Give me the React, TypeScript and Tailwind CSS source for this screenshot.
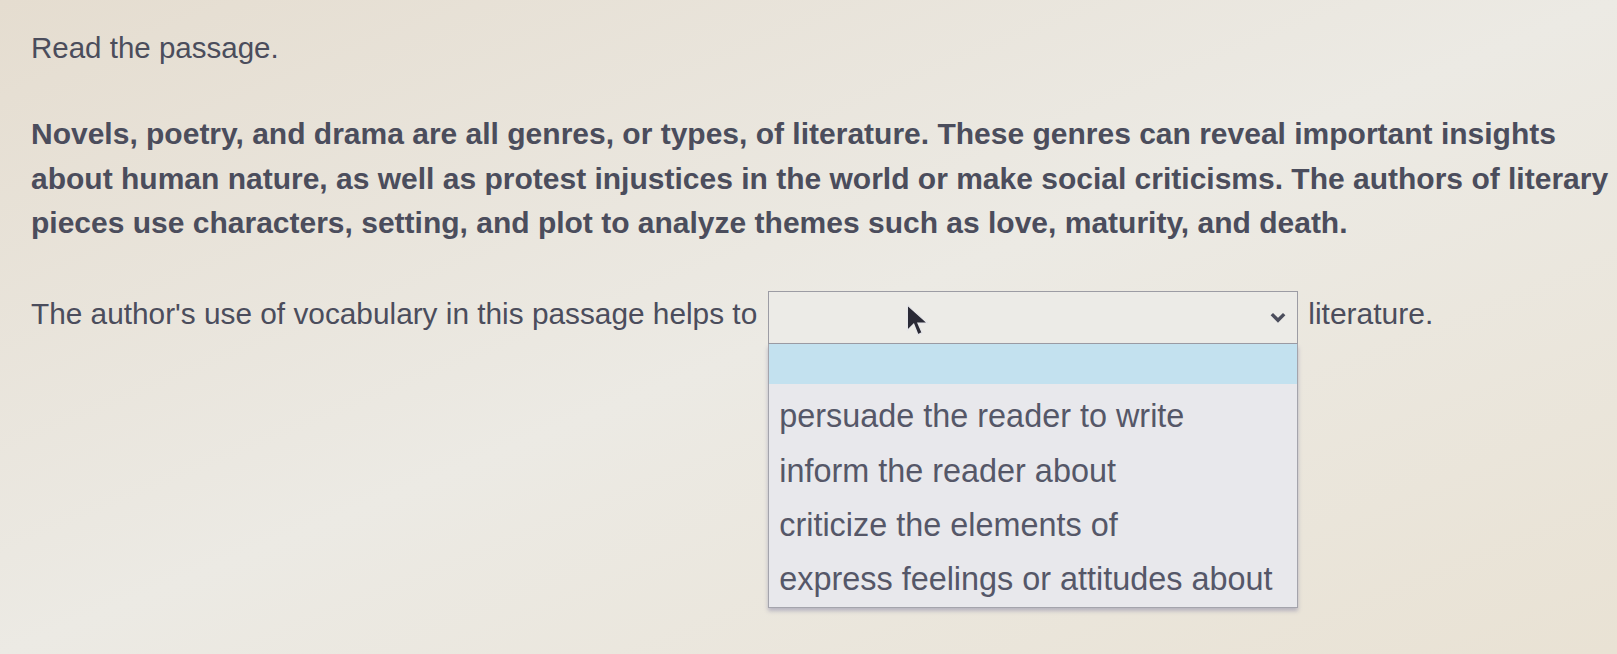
import React from "react";

const options = [
  "persuade the reader to write",
  "inform the reader about",
  "criticize the elements of",
  "express feelings or attitudes about",
];

const Cursor: React.FC = () => (
  <svg width="28" height="36" viewBox="0 0 26 34" className="absolute left-[137px] top-[12px]">
    <path d="M2 2 L2 26 L8 20 L12 30 L16 28 L12 19 L21 19 Z" fill="#2a2a36" stroke="#e8e8ea" strokeWidth="1.2" />
  </svg>
);

const App: React.FC = () => {
  return (
    <div
      className="w-[1617px] h-[654px] overflow-hidden bg-gradient-to-br from-[#e5ddd0] via-[#eceae4] to-[#e9e2d4] text-[#4b4d5c]"
      style={{ fontFamily: '"Liberation Sans", Arial, sans-serif' }}
    >
      <div className="pl-[31px] pt-[30px]">
        <p className="text-[29.5px] leading-[36px]">Read the passage.</p>

        <p className="mt-[46px] text-[30px] font-bold leading-[44.5px]">
          Novels, poetry, and drama are all genres, or types, of literature. These genres can reveal important insights
          <br />
          about human nature, as well as protest injustices in the world or make social criticisms. The authors of literary
          <br />
          pieces use characters, setting, and plot to analyze themes such as love, maturity, and death.
        </p>

        <div className="mt-[45px] flex items-start">
          <span className="text-[29.8px] leading-[52px] -mt-[3px] whitespace-nowrap">
            The author's use of vocabulary in this passage helps to
          </span>
          <div className="relative ml-[11px] w-[530px] shrink-0">
            <div className="h-[53px] border border-[#9c9ca4] bg-[#ecebe7] flex items-center justify-end pr-[10px]">
              <svg width="18" height="13" viewBox="0 0 16 11">
                <path d="M2.5 2.5 L8 8 L13.5 2.5" fill="none" stroke="#4b4d5c" strokeWidth="3" />
              </svg>
            </div>
            <Cursor />
            <div className="border border-t-0 border-[#a4a4ac] bg-[#e8e8ec] shadow-[0_3px_4px_rgba(90,90,140,0.35)]">
              <div className="h-[40px] bg-[#c3e1ef]" />
              <div className="pt-[6px]">
                {options.map((o) => (
                  <div key={o} className="h-[54.3px] flex items-center pl-[10px] text-[32.4px] text-[#555768] whitespace-nowrap">
                    {o}
                  </div>
                ))}
              </div>
            </div>
          </div>
          <span className="ml-[10px] text-[30px] leading-[52px] -mt-[3px]">literature.</span>
        </div>
      </div>
    </div>
  );
};

export default App;
